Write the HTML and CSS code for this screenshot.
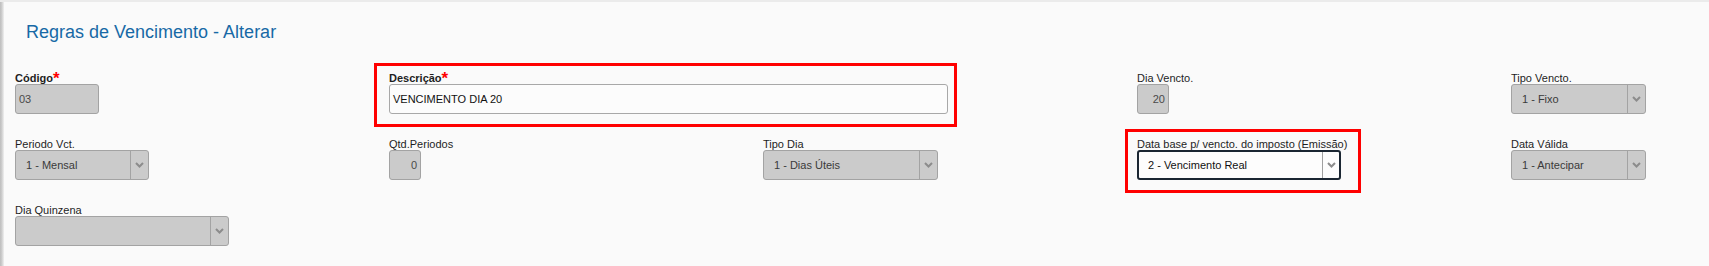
FILE: index.html
```
<!DOCTYPE html>
<html lang="pt-BR">
<head>
<meta charset="utf-8">
<title>Regras de Vencimento - Alterar</title>
<link rel="stylesheet" href="styles.css">
</head>
<body>
<div class="page">
  <h1 class="title">Regras de Vencimento - Alterar</h1>
  <div class="form">
    <div class="field w-codigo">
      <label class="lbl bold">Código<span class="req">*</span></label>
      <div class="input disabled">03</div>
    </div>
    <div class="field w-desc span2 hl hl-desc">
      <label class="lbl bold">Descrição<span class="req">*</span></label>
      <div class="input editable">VENCIMENTO DIA 20</div>
    </div>
    <div class="field w-num">
      <label class="lbl">Dia Vencto.</label>
      <div class="input disabled num">20</div>
    </div>
    <div class="field w-tipo">
      <label class="lbl">Tipo Vencto.</label>
      <div class="select disabled"><span class="val">1 - Fixo</span><span class="arrow"><svg width="9" height="6" viewBox="0 0 9 6"><polyline points="1,1 4.5,4.5 8,1"/></svg></span></div>
    </div>

    <div class="field w-periodo">
      <label class="lbl">Periodo Vct.</label>
      <div class="select disabled"><span class="val">1 - Mensal</span><span class="arrow"><svg width="9" height="6" viewBox="0 0 9 6"><polyline points="1,1 4.5,4.5 8,1"/></svg></span></div>
    </div>
    <div class="field w-num">
      <label class="lbl">Qtd.Periodos</label>
      <div class="input disabled num">0</div>
    </div>
    <div class="field w-tipodia">
      <label class="lbl">Tipo Dia</label>
      <div class="select disabled"><span class="val">1 - Dias Úteis</span><span class="arrow"><svg width="9" height="6" viewBox="0 0 9 6"><polyline points="1,1 4.5,4.5 8,1"/></svg></span></div>
    </div>
    <div class="field w-base hl hl-base">
      <label class="lbl">Data base p/ vencto. do imposto (Emissão)</label>
      <div class="select active"><span class="val">2 - Vencimento Real</span><span class="arrow"><svg width="9" height="6" viewBox="0 0 9 6"><polyline points="1,1 4.5,4.5 8,1"/></svg></span></div>
    </div>
    <div class="field w-tipo">
      <label class="lbl">Data Válida</label>
      <div class="select disabled"><span class="val">1 - Antecipar</span><span class="arrow"><svg width="9" height="6" viewBox="0 0 9 6"><polyline points="1,1 4.5,4.5 8,1"/></svg></span></div>
    </div>

    <div class="field w-quinzena">
      <label class="lbl">Dia Quinzena</label>
      <div class="select disabled"><span class="val"></span><span class="arrow"><svg width="9" height="6" viewBox="0 0 9 6"><polyline points="1,1 4.5,4.5 8,1"/></svg></span></div>
    </div>
  </div>
</div>
</body>
</html>
```

FILE: styles.css
```
html, body {
  margin: 0;
  padding: 0;
  background: #fafafa;
  overflow: hidden;
}

body {
  font-family: "Liberation Sans", Arial, sans-serif;
  color: #222;
}

.page {
  min-height: 266px;
  box-sizing: border-box;
  border-top: 2px solid #ebebeb;
  background-image: linear-gradient(to right, #bdbdbd 0, #cfcfcf 2px, #e2e2e2 3px, #efefef 4px, transparent 4px);
  background-repeat: no-repeat;
  padding-left: 4px;
}

.title {
  margin: 0;
  padding: 20px 0 0 22px;
  font-size: 18px;
  line-height: 20px;
  font-weight: normal;
  color: #1769a6;
}

.form {
  margin-top: 30px;
  padding-left: 11px;
  display: grid;
  grid-template-columns: 374px 374px 374px 374px 1fr;
  row-gap: 24px;
  align-items: start;
}

.field {
  position: relative;
  justify-self: start;
}

.span2 { grid-column: span 2; }

.w-codigo { width: 84px; }
.w-desc { width: 559px; }
.w-num { width: 32px; }
.w-tipo { width: 135px; }
.w-periodo { width: 134px; }
.w-tipodia { width: 175px; }
.w-base { width: 204px; }
.w-quinzena { width: 214px; }

.lbl {
  display: block;
  font-size: 11px;
  line-height: 12px;
  color: #1e1e1e;
  white-space: nowrap;
}

.lbl.bold { font-weight: bold; }

.req {
  color: #f00;
  font-weight: bold;
  font-size: 17px;
  line-height: 0;
  position: relative;
  top: 2px;
}

.input,
.select {
  box-sizing: border-box;
  height: 30px;
  border: 1px solid #a3a3a3;
  border-radius: 3px;
  font-size: 11px;
  display: flex;
  align-items: center;
}

.input {
  padding: 0 3px;
}

.input.num {
  justify-content: flex-end;
}

.disabled {
  background: #cbcbcb;
  color: #4a4a4a;
}

.input.editable {
  background: #fcfcfc;
  color: #111;
  border-color: #a8a8a8;
}

.select {
  align-items: stretch;
}

.select .val {
  flex: 1;
  display: flex;
  align-items: center;
  padding-left: 10px;
  white-space: nowrap;
  overflow: hidden;
}

.select.disabled .val { color: #3a3a3a; }

.select .arrow {
  width: 17px;
  border-left: 1px solid #a3a3a3;
  display: flex;
  align-items: center;
  justify-content: center;
}

.select .arrow svg polyline {
  fill: none;
  stroke: #8c8c8c;
  stroke-width: 2;
}

.select.active {
  background: #fdfdfd;
  border: 2px solid #1b2632;
  color: #111;
}

.select.active .val { padding-left: 9px; }

.select.active .arrow { width: 16px; border-left-color: #a0a0a0; }

.hl::after {
  content: "";
  position: absolute;
  border: 3px solid #ff0000;
  pointer-events: none;
}

.hl-desc::after {
  top: -9px;
  left: -15px;
  right: -9px;
  bottom: -13px;
}

.hl-base::after {
  top: -9px;
  left: -12px;
  right: -20px;
  bottom: -13px;
}
```
